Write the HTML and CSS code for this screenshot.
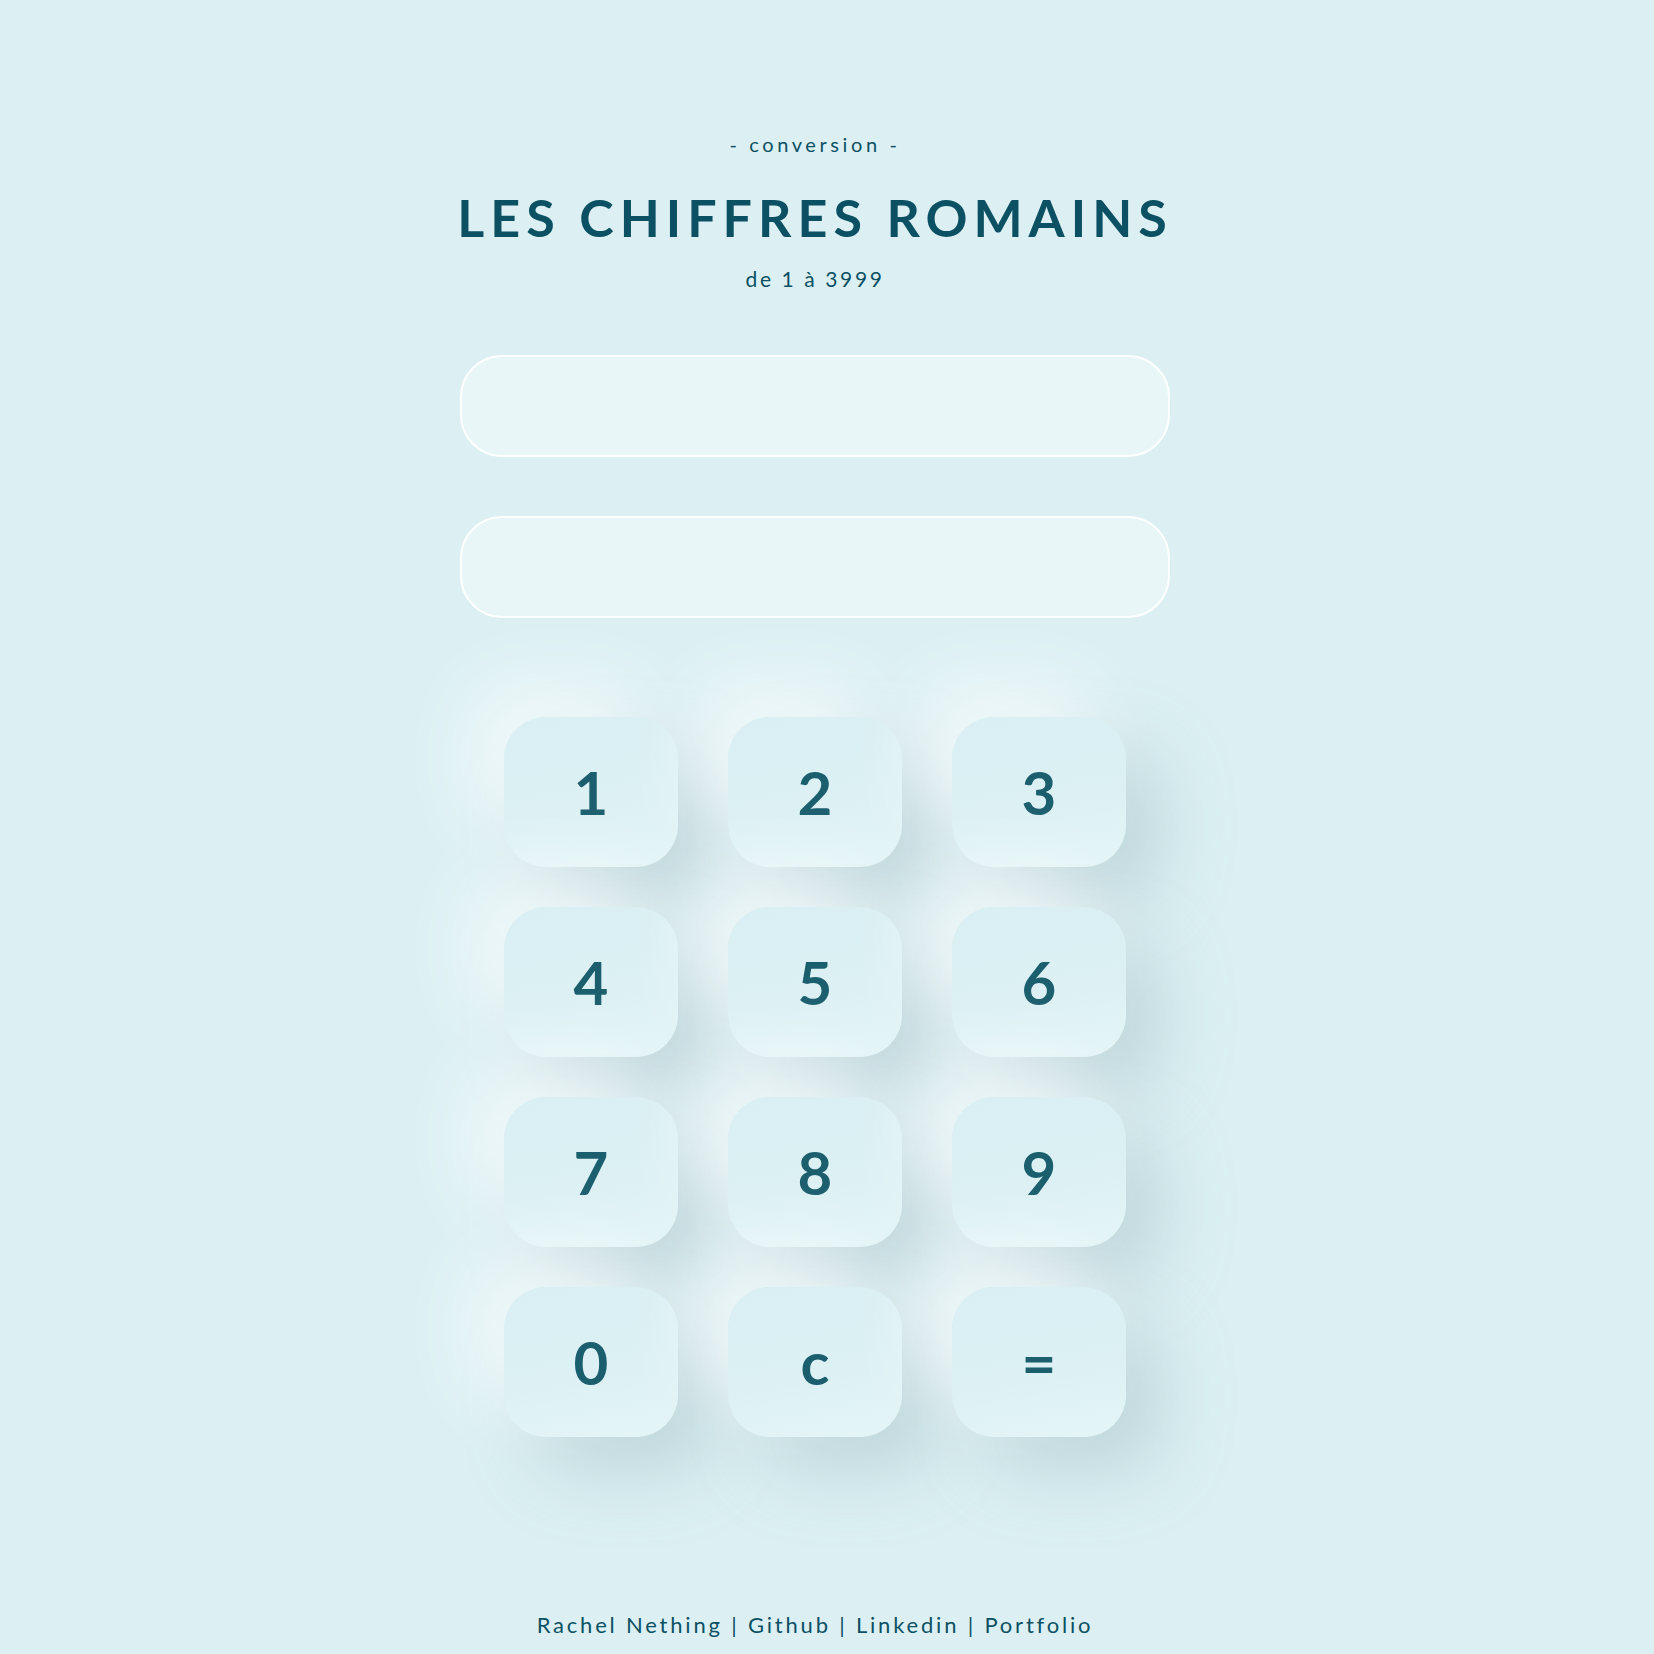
FILE: index.html
```html
<!DOCTYPE html>
<html lang="fr">
<head>
<meta charset="utf-8">
<title>Les chiffres romains</title>
<link rel="stylesheet" href="styles.css">
</head>
<body>
<main class="page">
  <header class="head">
    <p class="kicker">- conversion -</p>
    <h1 class="title">LES CHIFFRES ROMAINS</h1>
    <p class="range">de 1 à 3999</p>
  </header>
  <section class="fields">
    <input class="field" type="text" aria-label="nombre">
    <input class="field" type="text" aria-label="chiffre romain">
  </section>
  <section class="pad">
    <button class="key">1</button>
    <button class="key">2</button>
    <button class="key">3</button>
    <button class="key">4</button>
    <button class="key">5</button>
    <button class="key">6</button>
    <button class="key">7</button>
    <button class="key">8</button>
    <button class="key">9</button>
    <button class="key">0</button>
    <button class="key">c</button>
    <button class="key">=</button>
  </section>
  <footer class="foot">Rachel Nething | Github | Linkedin | Portfolio</footer>
</main>
</body>
</html>
```

FILE: styles.css
```css
html, body {
  margin: 0;
  padding: 0;
}
body {
  background: #dcf0f3;
  font-family: "Lato", "Open Sans", sans-serif;
  color: #0b5063;
}
.page {
  display: flex;
  flex-direction: column;
  align-items: center;
  padding-right: 24px;
}
.head {
  display: flex;
  flex-direction: column;
  align-items: center;
  padding-top: 130px;
}
.kicker {
  margin: 0;
  font-size: 20px;
  line-height: 28px;
  letter-spacing: 3.6px;
}
.title {
  margin: 28px 0 0;
  font-size: 52px;
  line-height: 62px;
  font-weight: 700;
  letter-spacing: 6px;
}
.range {
  margin: 17px 0 0;
  font-size: 21px;
  line-height: 28px;
  letter-spacing: 2.6px;
}
.fields {
  display: flex;
  flex-direction: column;
  gap: 59px;
  margin-top: 62px;
}
.field {
  box-sizing: border-box;
  width: 710px;
  height: 102px;
  border: 2px solid #ffffff;
  border-radius: 42px;
  background: #e8f6f7;
  outline: none;
  margin: 0;
}
.pad {
  display: grid;
  grid-template-columns: repeat(3, 174px);
  grid-auto-rows: 150px;
  column-gap: 50px;
  row-gap: 40px;
  margin-top: 99px;
}
.key {
  border: none;
  border-radius: 42px;
  background: linear-gradient(170deg, #d9eff3 0%, #ddf1f4 60%, #e4f5f7 100%);
  box-shadow: -34px -34px 70px rgba(255, 255, 255, 0.6), 34px 34px 70px rgba(135, 165, 174, 0.34);
  font-family: "Lato", sans-serif;
  font-weight: 700;
  font-size: 60px;
  color: #1b5e6e;
  padding: 0;
}
.foot {
  margin-top: 173px;
  font-size: 22px;
  letter-spacing: 2.8px;
  line-height: 30px;
}
```
